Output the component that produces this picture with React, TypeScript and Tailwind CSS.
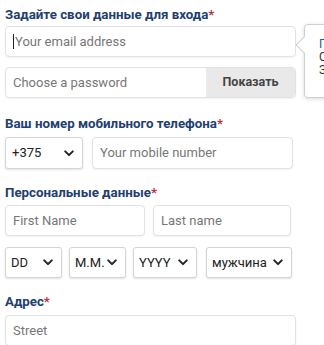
import React from 'react';

const Chevron = () => (
  <svg viewBox="0 0 12 8" className="w-[10px] h-[7px] shrink-0" fill="none" stroke="#222" strokeWidth="2.4" strokeLinecap="round" strokeLinejoin="round">
    <path d="M1.5 1.5 6 6l4.5-4.5" />
  </svg>
);

const Title = ({ text, className }: { text: string; className: string }) => (
  <div className={`text-[13.3px] leading-[17px] font-bold text-[#22406f] ${className}`}>
    {text}
    <span className="text-[#b9313a]">*</span>
  </div>
);

const Field = ({ placeholder, className }: { placeholder: string; className: string }) => (
  <div className={`h-[31px] flex items-center px-[7px] border border-[#e2e2e2] rounded-[4px] shadow-[0_1px_2px_rgba(0,0,0,0.06)] bg-white text-[13px] text-[#777] ${className}`}>
    {placeholder}
  </div>
);

const Select = ({ value, className }: { value: string; className: string }) => (
  <div className={`flex items-center justify-between pl-[5px] pr-[8px] border border-[#d4d4d4] rounded-[3px] shadow-[0_1px_2px_rgba(0,0,0,0.12)] bg-white text-[13px] text-[#222] ${className}`}>
    <span>{value}</span>
    <Chevron />
  </div>
);

export default function App() {
  return (
    <div className="relative w-[324px] h-[345px] overflow-hidden bg-white pl-[5px] font-['Roboto',sans-serif]">
      {/* login */}
      <Title text="Задайте свои данные для входа" className="pt-[6px] pb-[3px]" />
      <div className="h-[31px] w-[291px] flex items-center px-[7px] border border-[#e2e2e2] rounded-[4px] shadow-[0_1px_2px_rgba(0,0,0,0.06)] text-[13px] text-[#777]">
        <span className="w-px h-[15px] bg-[#222] mr-px" />
        Your email address
      </div>
      <div className="mt-[10px] h-[31px] w-[291px] flex border border-[#e2e2e2] rounded-[4px] shadow-[0_1px_2px_rgba(0,0,0,0.06)] text-[13px]">
        <div className="flex-1 flex items-center px-[7px] text-[#777]">Choose a password</div>
        <div className="w-[89px] flex items-center justify-center bg-[#e9e9e9] rounded-r-[4px] font-bold text-[12.5px] text-[#444]">Показать</div>
      </div>

      {/* phone */}
      <Title text="Ваш номер мобильного телефона" className="pt-[17px] pb-[5px]" />
      <div className="flex gap-[9px]">
        <Select value="+375" className="w-[78px] h-[32px] pl-[6px]" />
        <Field placeholder="Your mobile number" className="w-[201px] h-[32px]" />
      </div>

      {/* personal */}
      <Title text="Персональные данные" className="pt-[15px] pb-[4px]" />
      <div className="flex gap-[8px]">
        <Field placeholder="First Name" className="w-[140px]" />
        <Field placeholder="Last name" className="w-[138px]" />
      </div>
      <div className="mt-[11px] flex h-[31px]">
        <Select value="DD" className="w-[57px]" />
        <Select value="M.M." className="w-[57px] ml-[7px]" />
        <Select value="YYYY" className="w-[64px] ml-[7px]" />
        <Select value="мужчина" className="w-[86px] ml-[9px]" />
      </div>

      {/* address */}
      <Title text="Адрес" className="pt-[15px] pb-[5px]" />
      <Field placeholder="Street" className="w-[291px] h-[30px]" />

      {/* password hint tooltip */}
      <div className="absolute left-[304px] top-[24px] w-[160px] h-[74px] bg-white border border-[#cfcfcf] rounded-[4px] shadow-[0_1px_4px_rgba(0,0,0,0.15)] pl-[14px] pt-[13px] text-[12px] leading-[13px] text-[#333]">
        <div className="absolute -left-[7px] top-[14px] w-[12px] h-[12px] bg-white border-l border-b border-[#cfcfcf] rotate-45" />
        <div className="text-[#1f5a9c]">Пароль должен</div>
        <div>Содержать не менее</div>
        <div>Знаков</div>
      </div>
    </div>
  );
}
